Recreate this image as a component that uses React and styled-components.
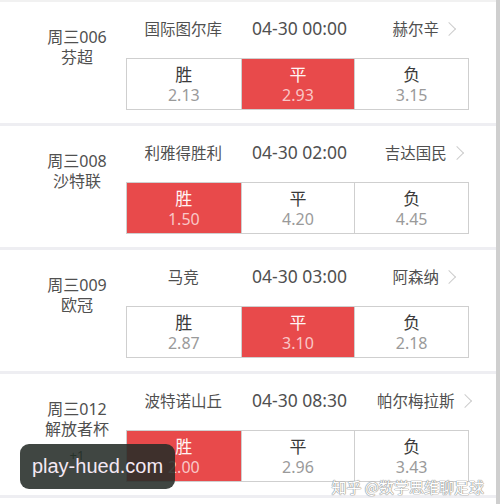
import styled, { createGlobalStyle } from "styled-components";

const GlobalStyle = createGlobalStyle`
  html, body {
    margin: 0;
    padding: 0;
    background: #ffffff;
  }
  body {
    font-family: "Noto Sans", "Noto Sans CJK SC", sans-serif;
  }
`;

const matches = [
  {
    id: "周三006",
    league: "芬超",
    home: "国际图尔库",
    time: "04-30 00:00",
    away: "赫尔辛",
    odds: ["2.13", "2.93", "3.15"],
    pick: 1,
  },
  {
    id: "周三008",
    league: "沙特联",
    home: "利雅得胜利",
    time: "04-30 02:00",
    away: "吉达国民",
    odds: ["1.50", "4.20", "4.45"],
    pick: 0,
  },
  {
    id: "周三009",
    league: "欧冠",
    home: "马竞",
    time: "04-30 03:00",
    away: "阿森纳",
    odds: ["2.87", "3.10", "2.18"],
    pick: 1,
  },
  {
    id: "周三012",
    league: "解放者杯",
    home: "波特诺山丘",
    time: "04-30 08:30",
    away: "帕尔梅拉斯",
    odds: ["2.00", "2.96", "3.43"],
    pick: 0,
    extra: "+1",
  },
];

const labels = ["胜", "平", "负"];

const App = () => {
  return (
    <>
      <GlobalStyle />
      <Page>
        <TopBand />
        {matches.map((m) => (
          <Row key={m.id}>
            <League>
              <span>{m.id}</span>
              <span>{m.league}</span>
              {m.extra && <Extra>{m.extra}</Extra>}
            </League>
            <Main>
              <Header>
                <Team>{m.home}</Team>
                <Time>{m.time}</Time>
                <Team>
                  <Away>{m.away}</Away>
                </Team>
              </Header>
              <OddsBox>
                {labels.map((l, i) => (
                  <Cell key={l} active={i === m.pick}>
                    <CellLabel active={i === m.pick}>{l}</CellLabel>
                    <CellValue active={i === m.pick}>{m.odds[i]}</CellValue>
                  </Cell>
                ))}
              </OddsBox>
            </Main>
          </Row>
        ))}
        <Watermark>play-hued.com</Watermark>
        <Credit>知乎 @数学思维聊足球</Credit>
      </Page>
    </>
  );
};

const Page = styled.div`
  position: relative;
  width: 496px;
  height: 504px;
  overflow: hidden;
  border-right: 4px solid #cfcfcf;
  background: #fff;
`;

const TopBand = styled.div`
  height: 2px;
  background: #f1f1f1;
`;

const Row = styled.div`
  display: flex;
  height: 121px;
  border-bottom: 3px solid #eeeef2;
`;

const League = styled.div`
  width: 98px;
  margin-left: 28px;
  padding-top: 25px;
  display: flex;
  flex-direction: column;
  align-items: center;
  font-size: 16px;
  line-height: 20px;
  color: #505050;
`;

const Extra = styled.span`
  margin-top: 6px;
  font-size: 13px;
  color: #2e5a3c;
`;

const Main = styled.div`
  width: 343px;
  display: flex;
  flex-direction: column;
`;

const Header = styled.div`
  display: grid;
  grid-template-columns: 1fr 1fr 1fr;
  height: 56px;
  align-items: center;
  padding-bottom: 4px;
  box-sizing: border-box;
  font-size: 15.5px;
  color: #505050;
`;

const Team = styled.div`
  text-align: center;
  white-space: nowrap;
`;

const Time = styled.div`
  text-align: center;
  font-size: 17.5px;
  color: #505050;
  padding-left: 4px;
  white-space: nowrap;
`;

const Away = styled.span`
  position: relative;
  margin-left: 8px;
  &::after {
    content: "";
    position: absolute;
    right: -15px;
    top: 50%;
    width: 9px;
    height: 9px;
    border-top: 1.5px solid #cdcdcd;
    border-right: 1.5px solid #cdcdcd;
    transform: translateY(-50%) rotate(45deg);
  }
`;

const OddsBox = styled.div`
  display: grid;
  grid-template-columns: 1fr 1fr 1fr;
  height: 52px;
  border: 1px solid #cfcfcf;
  box-sizing: border-box;
`;

const Cell = styled.div`
  display: flex;
  flex-direction: column;
  align-items: center;
  justify-content: center;
  background: ${(p) => (p.active ? "#e84a4b" : "#fff")};
  & + & {
    border-left: 1px solid #cfcfcf;
  }
`;

const CellLabel = styled.span`
  font-size: 17px;
  line-height: 21px;
  color: ${(p) => (p.active ? "#fff4f4" : "#3a3a3a")};
`;

const CellValue = styled.span`
  font-size: 16px;
  line-height: 20px;
  color: ${(p) => (p.active ? "#f9c7c7" : "#9a9a9a")};
`;

const Watermark = styled.div`
  position: absolute;
  left: 20px;
  top: 444px;
  width: 155px;
  height: 45px;
  border-radius: 9px;
  background: rgba(38, 44, 40, 0.88);
  color: #f4e8f4;
  font-family: "Liberation Sans", "Noto Sans", sans-serif;
  font-size: 20px;
  display: flex;
  align-items: center;
  justify-content: center;
`;

const Credit = styled.div`
  position: absolute;
  right: 12px;
  top: 476px;
  font-size: 15px;
  color: #fff;
  font-family: "Noto Sans CJK SC", sans-serif;
  text-shadow: 0 0 1px #888, 0 0 1px #888, 0 0 1px #999;
`;

export default App;
